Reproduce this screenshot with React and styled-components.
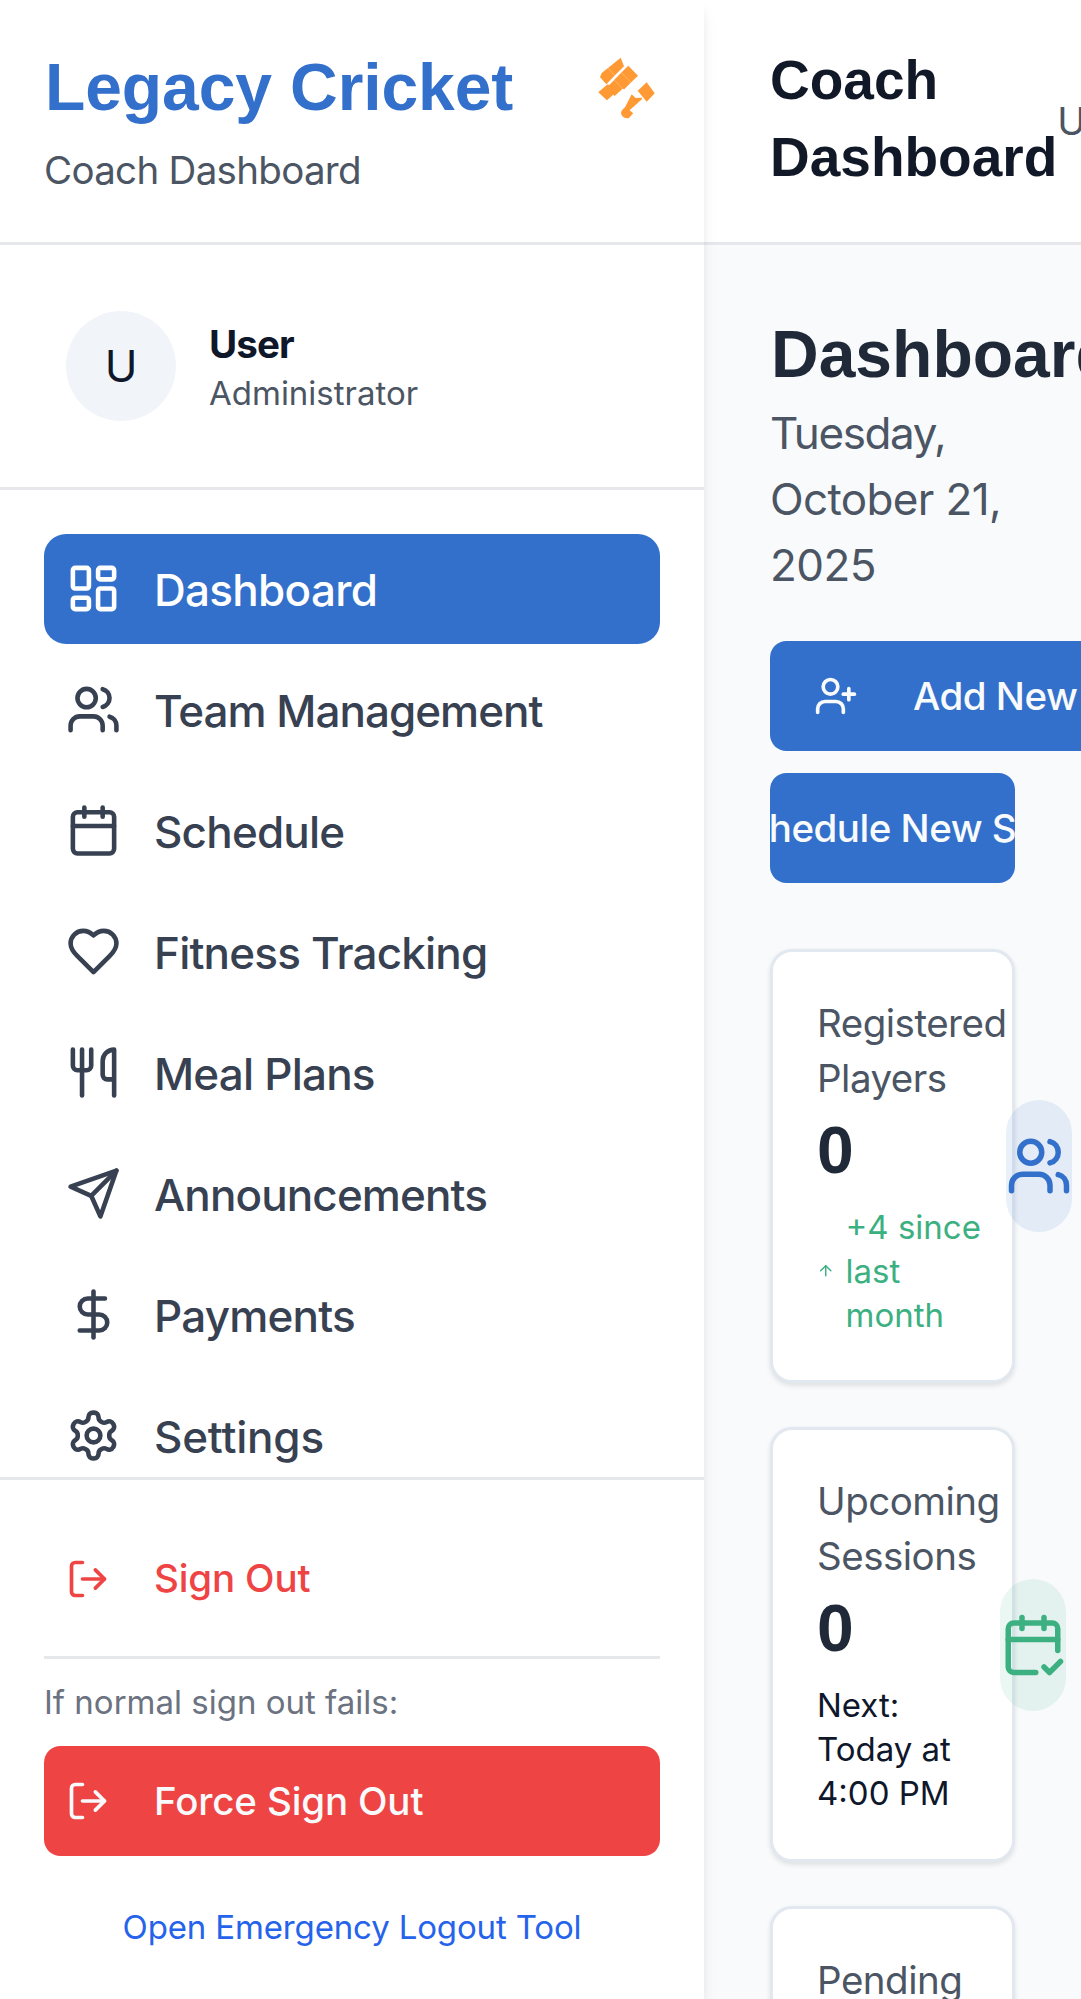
import React from "react";
import styled, { createGlobalStyle } from "styled-components";
import {
  LayoutDashboard, Users, Calendar, Utensils, DollarSign,
  LogOut, UserPlus, CalendarCheck2, CalendarPlus, ArrowUp, CreditCard,
} from "lucide-react";

const blue = "#3370cb";
const green = "#3cb081";
const line = "#e5e7eb";
const sans = `"Inter", "Noto Sans", sans-serif`;
const heading = `"Liberation Sans", Arial, sans-serif`;

const GlobalStyle = createGlobalStyle`
  *, *::before, *::after { box-sizing: border-box; }
  html, body { margin: 0; overflow: hidden; }
  h1, h2, p { margin: 0; }
  svg { flex-shrink: 0; display: block; }
  button { border: 0; background: none; font: inherit; text-align: left; }
  body { font-family: ${sans}; font-size: 44px; line-height: 66px; color: #0f172a; }
`;

const Shell = styled.div`
  display: flex;
  width: 1081px;
  height: 1999px;
  overflow: hidden;
  background: #f8fafc;
`;

const Sidebar = styled.aside`
  flex: 0 0 704px;
  display: flex;
  flex-direction: column;
  background: #fff;
  position: relative;
  z-index: 1;
  box-shadow: 0 11px 16.5px -2.75px rgba(0, 0, 0, 0.1), 0 5.5px 11px -5.5px rgba(0, 0, 0, 0.1);
`;

const Brand = styled.div`
  flex: none;
  height: 244.75px;
  padding: 44px;
  border-bottom: 3px solid ${line};
`;

const BrandRow = styled.div`
  display: flex;
  align-items: center;
  justify-content: space-between;
  height: 88px;
`;

const BrandName = styled.h1`
  padding: 0 0 2px 1px;
  font: 700 66px/88px ${heading};
  letter-spacing: -0.1px;
  color: ${blue};
`;

const Logo = styled.svg`
  margin: 2px 2px 0 0;
`;

const BrandSub = styled.p`
  margin-top: 11px;
  font-size: 38.5px;
  line-height: 55px;
  letter-spacing: -0.7px;
  color: #4b5563;
`;

const Profile = styled.div`
  flex: none;
  display: flex;
  align-items: center;
  gap: 33px;
  height: 244.75px;
  padding: 66px;
  border-bottom: 3px solid ${line};
`;

const Avatar = styled.div`
  display: grid;
  place-items: center;
  width: 110px;
  height: 110px;
  border-radius: 50%;
  background: #f1f5f9;
`;

const ProfileName = styled.p`
  font-size: 38.5px;
  line-height: 55px;
  font-weight: 650;
  letter-spacing: -0.9px;
`;

const ProfileRole = styled.p`
  margin-top: -1px;
  font-size: 33px;
  line-height: 44px;
  color: #4b5563;
`;

const Nav = styled.nav`
  flex: 1 1 0;
  min-height: 0;
  overflow: hidden;
  display: flex;
  flex-direction: column;
  gap: 11px;
  padding: 44px;
`;

const NavItem = styled.div`
  flex: none;
  display: flex;
  align-items: center;
  gap: 33px;
  height: 110px;
  padding: 0 22px;
  border-radius: 22px;
  font-weight: 500;
  color: ${(p) => (p.$active ? "#fff" : "#374151")};
  background: ${(p) => (p.$active ? blue : "transparent")};
`;

const Label = styled.span`
  padding-top: 2px;
  letter-spacing: ${(p) => p.$tracking || 0}px;
`;

const Footer = styled.div`
  flex: none;
  height: 522.5px;
  padding: 44px 44px 0;
  border-top: 3px solid ${line};
`;

const SignButton = styled.button`
  display: flex;
  align-items: center;
  gap: 44px;
  width: 100%;
  height: 110px;
  padding: 0 22px;
  border-radius: 16.5px;
  font-size: 38.5px;
  line-height: 55px;
  font-weight: 500;
  letter-spacing: -0.15px;
  color: ${(p) => (p.$solid ? "#f8fafc" : "#ef4444")};
  background: ${(p) => (p.$solid ? "#ef4444" : "transparent")};
`;

const Fallback = styled.div`
  margin-top: 22px;
  padding-top: 21px;
  border-top: 3px solid ${line};
`;

const FallbackHint = styled.p`
  margin-bottom: 22px;
  font-size: 33px;
  line-height: 44px;
  color: #6b7280;
`;

const EmergencyLink = styled.p`
  margin-top: 49px;
  font-size: 33px;
  line-height: 44px;
  letter-spacing: -0.15px;
  text-align: center;
  color: #2563eb;
`;

const Main = styled.main`
  flex: 1 1 0;
  min-width: 0;
`;

const TopBar = styled.header`
  display: flex;
  align-items: center;
  justify-content: space-between;
  height: 244.75px;
  padding: 0 66px;
  background: #fff;
  border-bottom: 3px solid ${line};
`;

const TopTitle = styled.h2`
  padding-bottom: 3px;
  font: 700 55px/77px ${heading};
  color: #111827;
`;

const TopUser = styled.span`
  padding-top: 2px;
  font-size: 38.5px;
  line-height: 55px;
  color: #4b5563;
`;

const Content = styled.div`
  padding: 65px 66px 66px;
`;

const PageTitle = styled.h1`
  padding-left: 1px;
  font: 700 66px/88px ${heading};
  color: #1f2937;
`;

const PageDate = styled.p`
  padding-top: 2px;
  color: #4b5563;
`;

const DateLine = styled.span`
  display: block;
  letter-spacing: ${(p) => p.$tracking}px;
`;

const Actions = styled.div`
  display: flex;
  flex-direction: column;
  align-items: flex-start;
  gap: 22px;
  margin: 43px 0 66px;
`;

const Action = styled.button`
  display: flex;
  align-items: center;
  justify-content: center;
  gap: ${(p) => (p.$clipped ? 27 : 55)}px;
  width: ${(p) => (p.$clipped ? "245px" : "auto")};
  height: 110px;
  padding: 0 44px;
  overflow: hidden;
  border-radius: 16.5px;
  white-space: nowrap;
  font-size: 38.5px;
  line-height: 55px;
  font-weight: 500;
  color: #f8fafc;
  background: ${blue};
`;

const Cards = styled.div`
  display: grid;
  grid-template-columns: 245px;
  gap: 44px;
`;

const Card = styled.section`
  display: flex;
  align-items: center;
  justify-content: space-between;
  height: 434.5px;
  padding: 44px;
  border: 3px solid #e2e8f0;
  border-radius: 22px;
  background: #fff;
  box-shadow: 0 2.75px 5.5px rgba(0, 0, 0, 0.1);
`;

const CardTitle = styled.p`
  font-size: 38.5px;
  line-height: 55px;
  letter-spacing: -0.5px;
  color: #4b5563;
`;

const CardValue = styled.p`
  font: 700 66px/88px ${heading};
  color: #1f2937;
`;

const CardNote = styled.p`
  display: flex;
  align-items: center;
  gap: 11px;
  margin-top: 11px;
  font-size: 33px;
  line-height: 44px;
  color: ${(p) => p.$tone || "inherit"};
`;

const NoteLine = styled.span`
  display: block;
  white-space: nowrap;
`;

const Pill = styled.div`
  flex: none;
  display: grid;
  place-items: center;
  width: 66px;
  height: 132px;
  border-radius: 66px;
  color: ${(p) => p.$tone};
  background: ${(p) => p.$tone}1a;
`;

const BatLogo = () => (
  <Logo width="66" height="66" viewBox="0 0 66 66" fill="#ff9933">
    <path d="M28.7 1.7 32 10.3 22.7 19.5 14.4 28.3 8 21.3 9.7 17 16 12Z" />
    <path d="M36.3 9.7 46 19.7 39.2 26.2 32.2 33.2 30.6 32.7 22.6 40 21.2 38.8 14.9 44.3 6.3 36.3 15.4 28.4 17.3 29 29.4 16.6Z" />
    <path d="M16.2 12.2 22.6 19.6M29.4 16.6 39 26.4M22.4 23.9 30.6 32.9" stroke="#fff" strokeOpacity="0.6" strokeWidth="0.45" fill="none" />
    <path d="M54.7 26.3 62.7 37.3 54.7 45.7 45.7 34.7Z" />
    <path d="M39.7 38.3 43.6 42.1 49.8 41.8 50.2 43 37.6 54.3 41.2 57.2 37 61.9A6.2 6.2 0 0 1 29 57.5C29 54.6 30.6 53.6 33 51.3Z" />
  </Logo>
);

const OutlineIcon = ({ size, children }) => (
  <svg
    width={size}
    height={size}
    viewBox="0 0 24 24"
    fill="none"
    stroke="currentColor"
    strokeWidth="2"
    strokeLinecap="round"
    strokeLinejoin="round"
  >
    {children}
  </svg>
);

const HeartIcon = ({ size }) => (
  <OutlineIcon size={size}>
    <path d="M19 14c1.49-1.46 3-3.21 3-5.5A5.5 5.5 0 0 0 16.5 3c-1.76 0-3 .5-4.5 2-1.5-1.5-2.74-2-4.5-2A5.5 5.5 0 0 0 2 8.5c0 2.3 1.5 4.05 3 5.5l7 7Z" />
  </OutlineIcon>
);

const SendIcon = ({ size }) => (
  <OutlineIcon size={size}>
    <path d="m22 2-7 20-4-9-9-4Z" />
    <path d="M22 2 11 13" />
  </OutlineIcon>
);

const GearIcon = ({ size }) => (
  <OutlineIcon size={size}>
    <path d="M12.22 2h-.44a2 2 0 0 0-2 2v.18a2 2 0 0 1-1 1.73l-.43.25a2 2 0 0 1-2 0l-.15-.08a2 2 0 0 0-2.73.73l-.22.38a2 2 0 0 0 .73 2.73l.15.1a2 2 0 0 1 1 1.72v.51a2 2 0 0 1-1 1.74l-.15.09a2 2 0 0 0-.73 2.73l.22.38a2 2 0 0 0 2.73.73l.15-.08a2 2 0 0 1 2 0l.43.25a2 2 0 0 1 1 1.73V20a2 2 0 0 0 2 2h.44a2 2 0 0 0 2-2v-.18a2 2 0 0 1 1-1.73l.43-.25a2 2 0 0 1 2 0l.15.08a2 2 0 0 0 2.73-.73l.22-.39a2 2 0 0 0-.73-2.73l-.15-.08a2 2 0 0 1-1-1.74v-.5a2 2 0 0 1 1-1.74l.15-.09a2 2 0 0 0 .73-2.73l-.22-.38a2 2 0 0 0-2.73-.73l-.15.08a2 2 0 0 1-2 0l-.43-.25a2 2 0 0 1-1-1.73V4a2 2 0 0 0-2-2z" />
    <circle cx="12" cy="12" r="3" />
  </OutlineIcon>
);

const nav = [
  { label: "Dashboard", Icon: LayoutDashboard, tracking: -0.7 },
  { label: "Team Management", Icon: Users, tracking: -1 },
  { label: "Schedule", Icon: Calendar, tracking: -0.8 },
  { label: "Fitness Tracking", Icon: HeartIcon, tracking: -0.8 },
  { label: "Meal Plans", Icon: Utensils, tracking: -0.8 },
  { label: "Announcements", Icon: SendIcon, tracking: -0.88 },
  { label: "Payments", Icon: DollarSign, tracking: -0.8 },
  { label: "Settings", Icon: GearIcon, tracking: -0.2 },
];

const stats = [
  { title: ["Registered", "Players"], note: ["+4 since", "last", "month"], noteTone: green, trend: true, tone: blue, Icon: Users },
  { title: ["Upcoming", "Sessions"], note: ["Next:", "Today at", "4:00 PM"], tone: green, Icon: CalendarCheck2 },
  { title: ["Pending", "Payments"], note: ["Due", "this", "month"], tone: "#ff9933", Icon: CreditCard },
];

export default function App() {
  return (
    <>
      <GlobalStyle />
      <Shell>
        <Sidebar>
          <Brand>
            <BrandRow>
              <BrandName>Legacy Cricket</BrandName>
              <BatLogo />
            </BrandRow>
            <BrandSub>Coach Dashboard</BrandSub>
          </Brand>
          <Profile>
            <Avatar>U</Avatar>
            <div>
              <ProfileName>User</ProfileName>
              <ProfileRole>Administrator</ProfileRole>
            </div>
          </Profile>
          <Nav>
            {nav.map(({ label, Icon, tracking }, i) => (
              <NavItem key={label} $active={i === 0}>
                <Icon size={55} />
                <Label $tracking={tracking}>{label}</Label>
              </NavItem>
            ))}
          </Nav>
          <Footer>
            <SignButton>
              <LogOut size={44} />
              Sign Out
            </SignButton>
            <Fallback>
              <FallbackHint>If normal sign out fails:</FallbackHint>
              <SignButton $solid>
                <LogOut size={44} />
                <Label $tracking={-0.15}>Force Sign Out</Label>
              </SignButton>
              <EmergencyLink>Open Emergency Logout Tool</EmergencyLink>
            </Fallback>
          </Footer>
        </Sidebar>
        <Main>
          <TopBar>
            <TopTitle>Coach Dashboard</TopTitle>
            <TopUser>User</TopUser>
          </TopBar>
          <Content>
            <PageTitle>Dashboard</PageTitle>
            <PageDate>
              <DateLine $tracking={-1.4}>Tuesday,</DateLine>
              <DateLine $tracking={-0.65}>October 21,</DateLine>
              <DateLine $tracking={-0.6}>2025</DateLine>
            </PageDate>
            <Actions>
              <Action>
                <UserPlus size={44} />
                <Label $tracking={-0.5}>Add New Player</Label>
              </Action>
              <Action $clipped>
                <CalendarPlus size={44} />
                <Label $tracking={-0.5}>Schedule New Session</Label>
              </Action>
            </Actions>
            <Cards>
              {stats.map(({ title, note, noteTone, trend, tone, Icon }) => (
                <Card key={title[0]}>
                  <div>
                    <CardTitle>{title.join(" ")}</CardTitle>
                    <CardValue>0</CardValue>
                    <CardNote $tone={noteTone}>
                      {trend && <ArrowUp size={17.5} />}
                      <span>
                        {note.map((text) => (
                          <NoteLine key={text}>{text}</NoteLine>
                        ))}
                      </span>
                    </CardNote>
                  </div>
                  <Pill $tone={tone}>
                    <Icon size={66} />
                  </Pill>
                </Card>
              ))}
            </Cards>
          </Content>
        </Main>
      </Shell>
    </>
  );
}
